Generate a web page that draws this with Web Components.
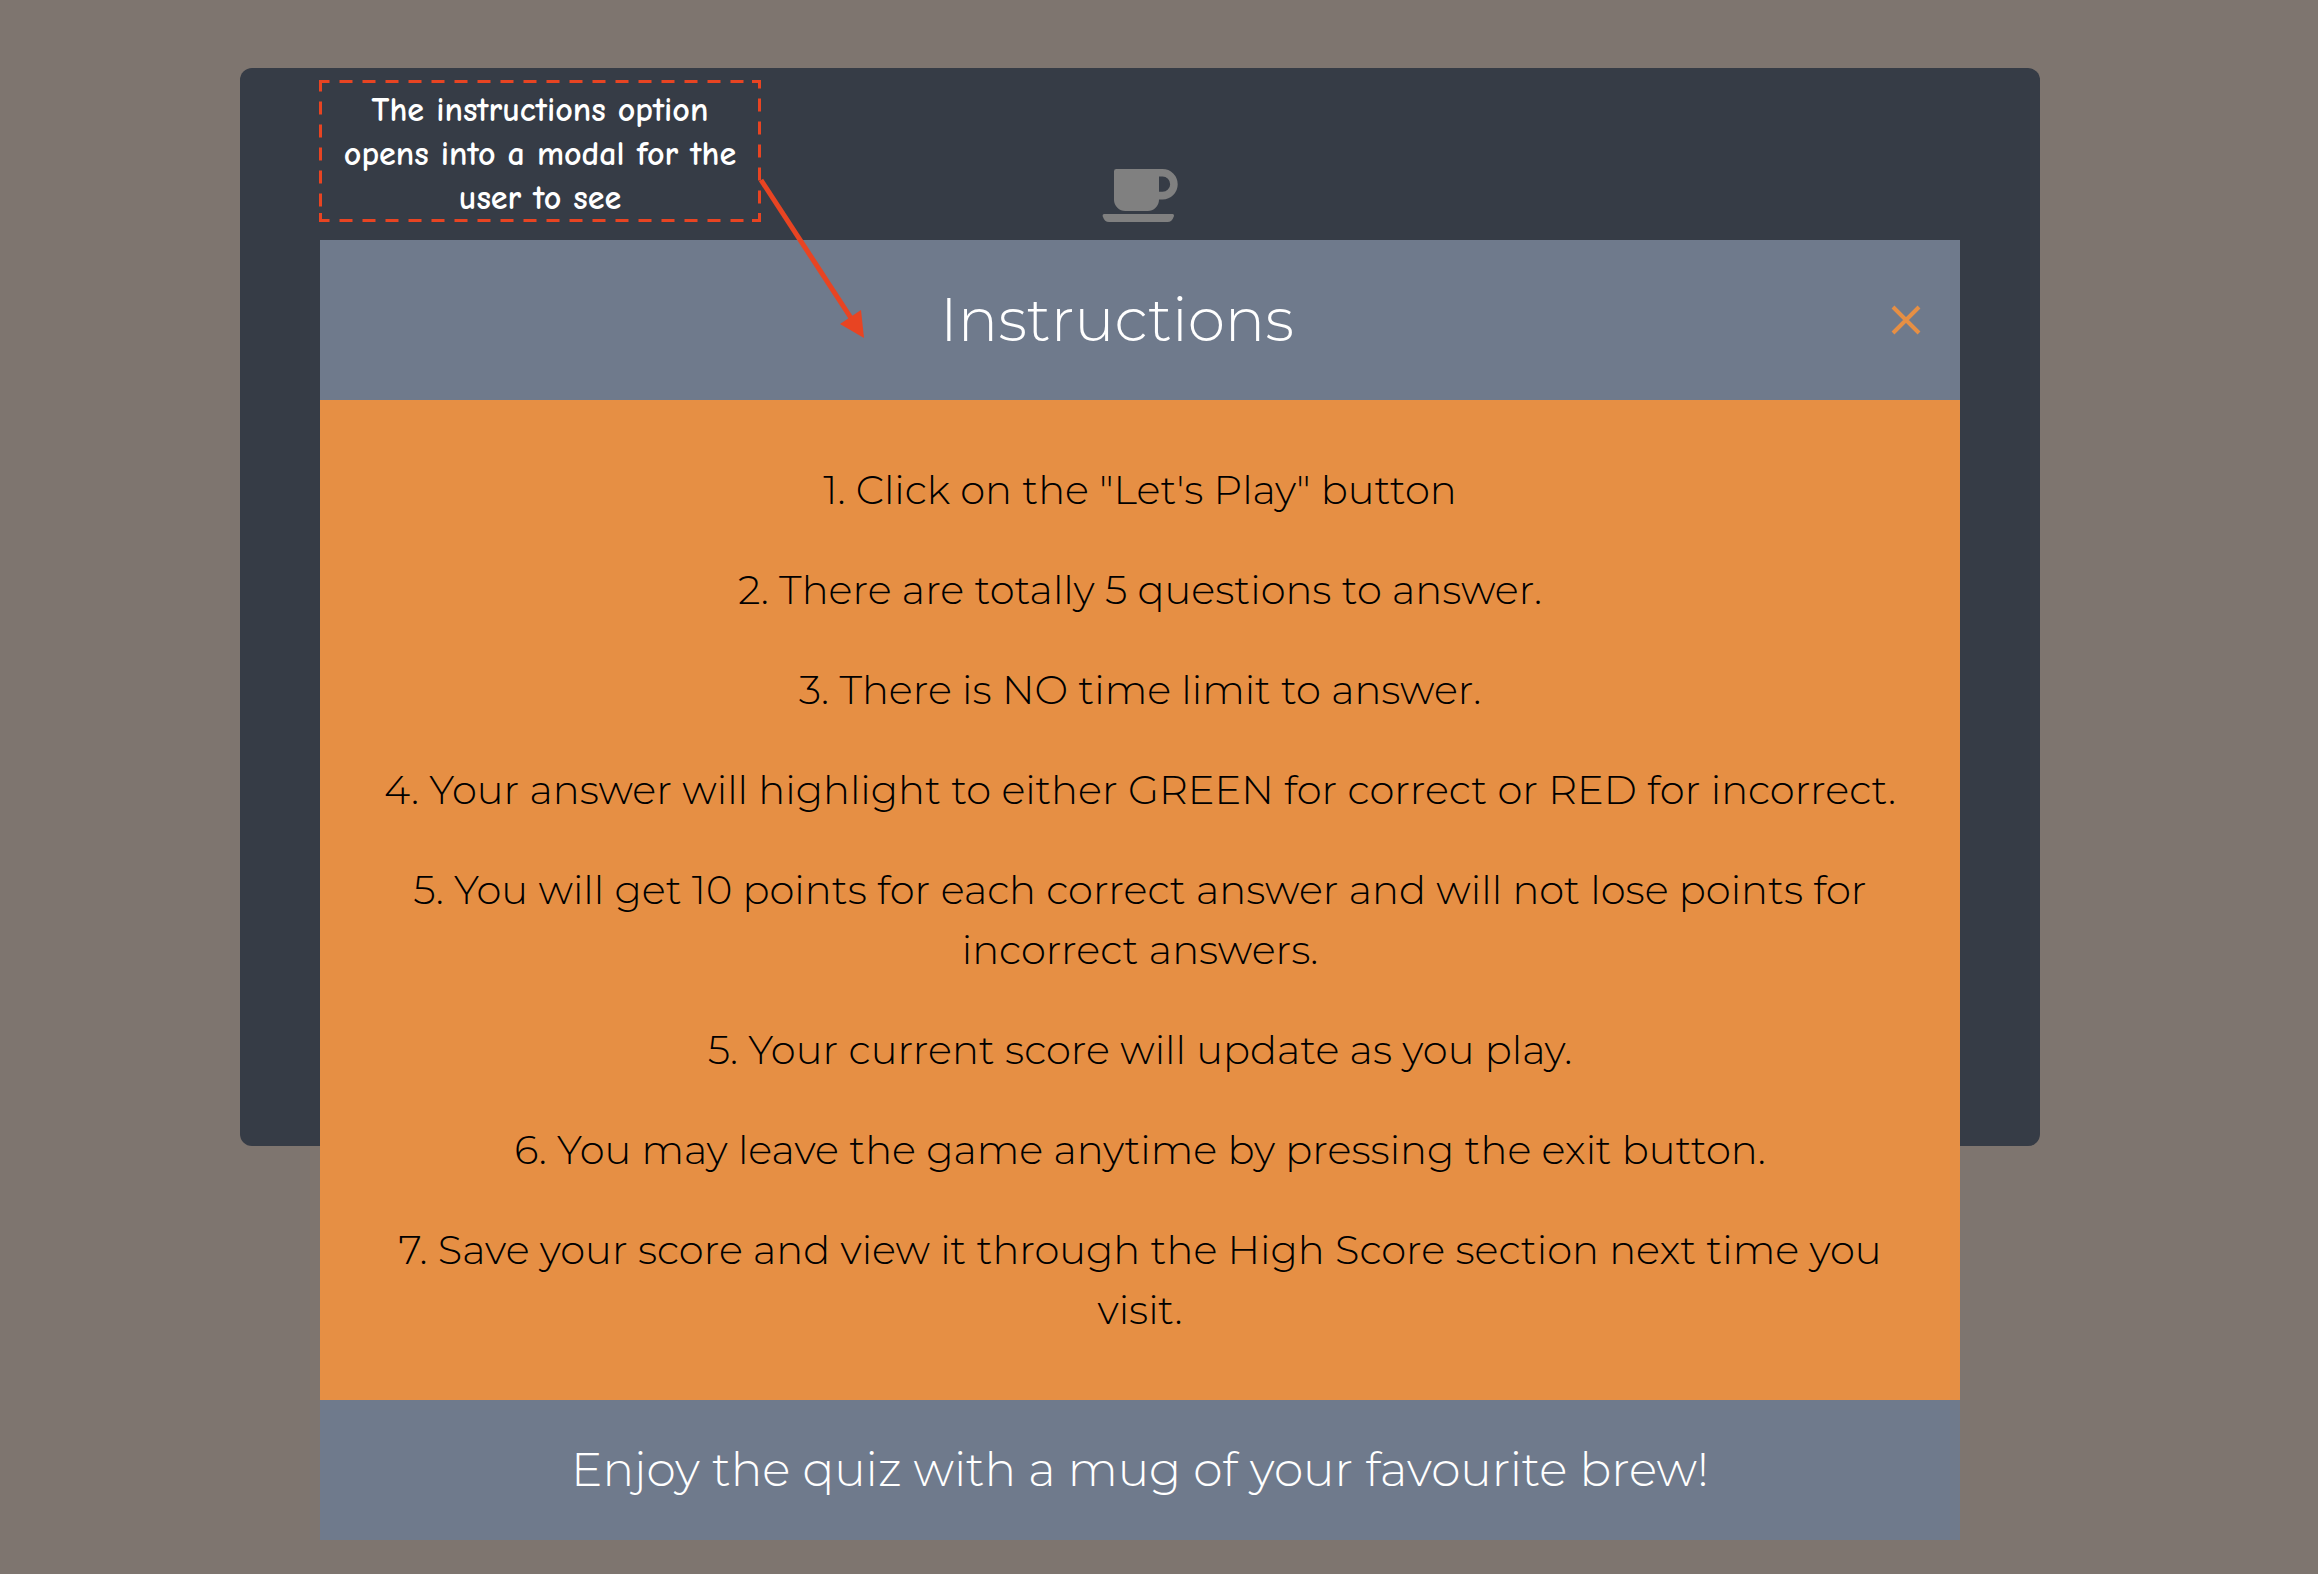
<!DOCTYPE html>
<html lang="en">
<head>
<meta charset="utf-8">
<title>Quiz – Instructions</title>
<style>
  html, body { margin: 0; min-height: 100%; }
  body { background: #7e756f; font-family: Montserrat, Inter, "Open Sans", sans-serif; font-weight: 300; }
</style>
</head>
<body>
<quiz-page>
  <quiz-card>
    <coffee-icon slot="icon"></coffee-icon>
  </quiz-card>
  <instructions-modal slot="modal" heading="Instructions">
    <p>1. Click on the "Let's Play" button</p>
    <p>2. There are totally 5 questions to answer.</p>
    <p>3. There is NO time limit to answer.</p>
    <p>4. Your answer will highlight to either GREEN for correct or RED for incorrect.</p>
    <p>5. You will get 10 points for each correct answer and will not lose points for incorrect answers.</p>
    <p>5. Your current score will update as you play.</p>
    <p>6. You may leave the game anytime by pressing the exit button.</p>
    <p>7. Save your score and view it through the High Score section next time you visit.</p>
    <span slot="footer">Enjoy the quiz with a mug of your favourite brew!</span>
  </instructions-modal>
  <callout-note slot="note">The instructions option opens into a modal for the user to see</callout-note>
</quiz-page>
<script>
const define = (name, html, setup) => customElements.define(name, class extends HTMLElement {
  connectedCallback() {
    if (this.shadowRoot) return;
    this.attachShadow({ mode: 'open' }).innerHTML = html;
    if (setup) setup(this);
  }
});

define('quiz-page', `
  <style>
    :host { display: block; box-sizing: border-box; padding: 68px 278px 34px 240px; }
    main { display: grid; position: relative; justify-items: stretch; align-items: start; }
    ::slotted(*) { grid-area: 1 / 1; }
    ::slotted(instructions-modal) { margin: 172px 80px 0; z-index: 1; }
    ::slotted(callout-note) { position: absolute; top: 12px; left: 79px; z-index: 2; }
  </style>
  <main><slot></slot><slot name="modal"></slot><slot name="note"></slot></main>`);

define('quiz-card', `
  <style>
    :host { display: flex; justify-content: center; align-items: flex-start; box-sizing: border-box;
            min-height: 1078px; padding-top: 100px; border-radius: 12px; background: #363c46; }
  </style>
  <slot name="icon"></slot>`);

define('coffee-icon', `
  <style>
    :host { display: block; }
    svg { display: block; width: 76px; height: 54px; fill: #808080; }
  </style>
  <svg viewBox="0 0 76 54" aria-hidden="true">
    <path fill-rule="evenodd" d="M14.300 1 H60.500 a15.200 15.200 0 0 1 0 30.400 H57 v.6 A11.300 11.300 0 0 1 45.700 43 H23.300 A11.300 11.300 0 0 1 12 32 V3.300 A2.300 2.300 0 0 1 14.300 1 Z M57 8.500 V23.800 H60.500 a7.650 7.650 0 0 0 0 -15.300 Z"/>
    <path d="M2.300 46 H70.500 Q72.500 46 71.800 48.500 Q70 54 65.500 54 H7 Q2.500 54 .8 48.500 Q.1 46 2.300 46 Z"/>
  </svg>`);

define('instructions-modal', `
  <style>
    :host { display: block; text-align: center; color: #000; }
    header, footer { background: #6f7a8c; color: #fff; }
    header { display: flex; align-items: center; gap: 14px; box-sizing: border-box; min-height: 160px; padding: 0 38px; }
    h2 { flex: 1; margin: 0; font-size: 60px; line-height: 90px; font-weight: 300; }
    button { padding: 0; border: 0; background: none; color: #e68f44; cursor: pointer; }
    button svg { display: block; width: 32px; height: 32px; stroke: currentColor; stroke-width: 4; fill: none; }
    section { display: flex; flex-direction: column; gap: 40px; padding: 60px 40px; background: #e68f44; }
    ::slotted(p) { margin: 0; font-size: 40px; line-height: 60px; }
    footer { padding: 35px 40px; font-size: 47px; line-height: 70px; }
  </style>
  <header>
    <h2></h2>
    <button type="button" aria-label="Close">
      <svg viewBox="0 0 32 32"><path d="M3 3 L29 29 M29 3 L3 29"/></svg>
    </button>
  </header>
  <section><slot></slot></section>
  <footer><slot name="footer"></slot></footer>`,
  el => { el.shadowRoot.querySelector('h2').textContent = el.getAttribute('heading'); });

define('callout-note', `
  <style>
    :host { display: block; box-sizing: border-box; width: 442px; padding: 8px 16px 2px;
            color: #fff; text-align: center; font: 700 34px/44px "Comic Neue", "Open Sans", sans-serif;
            font-variant-ligatures: none; }
    .frame { position: absolute; top: 0; left: 0; width: 100%; height: 100%; overflow: visible; fill: none; stroke: #e84422; stroke-width: 3; }
    .arrow { position: absolute; top: 98px; left: 440px; width: 106px; height: 162px; overflow: visible; }
  </style>
  <slot></slot>
  <svg class="frame" viewBox="0 0 442 142" preserveAspectRatio="none" aria-hidden="true">
    <path stroke-dasharray="13 10" stroke-dashoffset="4" d="M1.500 1.500 H440.500 V140.500 H1.500 Z"/>
    <path d="M1.500 8 V1.500 H9 M433 1.500 H440.500 V8 M440.500 133 V140.500 H433 M9 140.500 H1.500 V133"/>
  </svg>
  <svg class="arrow" viewBox="0 0 106 162" aria-hidden="true">
    <path d="M2 2 L92 140" fill="none" stroke="#e84422" stroke-width="5"/>
    <path d="M105 160 L81 146 L102 132 Z" fill="#e84422"/>
  </svg>`);
</script>
</body>
</html>
